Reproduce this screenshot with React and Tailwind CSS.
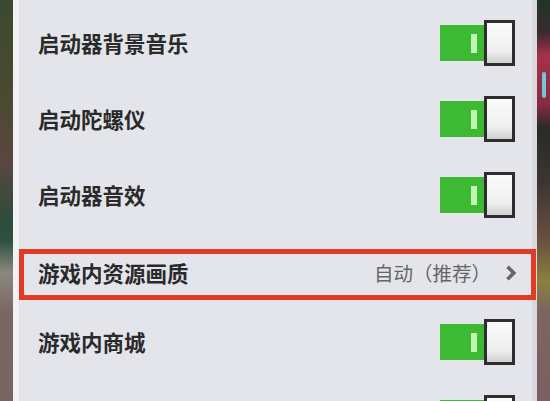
const font = { fontFamily: '"Noto Sans CJK SC", "Noto Sans", sans-serif' }

const rows = [
  { label: '启动器背景音乐', type: 'toggle' },
  { label: '启动陀螺仪', type: 'toggle' },
  { label: '启动器音效', type: 'toggle' },
  { label: '游戏内资源画质', type: 'select', value: '自动（推荐）' },
  { label: '游戏内商城', type: 'toggle' },
  { label: '游戏内社区', type: 'toggle' },
]

function Toggle() {
  return (
    <div className="flex items-center">
      <div className="flex h-[36px] w-[45px] items-center justify-end bg-[#3dba34] pr-[8px]">
        <div className="h-[19px] w-[6px] bg-[#c4f4b4]" />
      </div>
      <div className="-ml-px h-[46px] w-[31px] border-[3px] border-[#2e2e2e] bg-[linear-gradient(180deg,#fbfbfb_0%,#efefef_70%,#cfcfcf_100%)]" />
    </div>
  )
}

function Chevron() {
  return (
    <svg width="12" height="16" viewBox="0 0 12 16" className="text-[#666]">
      <path d="M2.5 1.8 L8.8 8 L2.5 14.2" fill="none" stroke="currentColor" strokeWidth="3.6" strokeLinejoin="miter" />
    </svg>
  )
}

export default function App() {
  return (
    <div className="flex h-[401px] w-[550px] overflow-hidden" style={font}>
      <div className="w-[13px] shrink-0 bg-[linear-gradient(180deg,#3b4a2f_0%,#4a4a30_25%,#5a4640_40%,#2f4c3b_55%,#2c5140_60%,#8a887e_68%,#7b6560_78%,#7a6460_100%)]" />

      <div className="flex w-[524px] shrink-0 flex-col border-l-[6px] border-r-[5px] border-l-[#f2f2f4] border-r-[#d9d9dd] bg-[#e4e5ea] pt-[5px]">
        {rows.map((r, i) =>
          r.type === 'select' ? (
            <div key={i} className="h-[71px] shrink-0 pt-[16px] pb-[4px]">
              <div className="-mr-[4px] flex h-[51px] items-center justify-between border-[5px] border-[#e23a24] pl-[14px] pr-[14px] pb-[3px]">
                <span className="text-[21.5px] font-bold leading-none text-[#2a2a2a]">{r.label}</span>
                <div className="flex items-center gap-[14px]">
                  <span className="text-[19.5px] leading-none text-[#666]">{r.value}</span>
                  <Chevron />
                </div>
              </div>
            </div>
          ) : (
            <div key={i} className="flex h-[76px] shrink-0 items-center justify-between pl-[19px] pr-[17px]">
              <span className="text-[21.5px] font-bold leading-none text-[#2a2a2a]">{r.label}</span>
              <Toggle />
            </div>
          )
        )}
      </div>

      <div className="relative flex-1 bg-[linear-gradient(180deg,#1f3626_0%,#3a2a30_8%,#a8304c_14%,#8a2a40_26%,#2a2a28_32%,#3a3530_45%,#6a5040_60%,#8a8040_70%,#7c6560_78%,#7a6060_100%)]">
        <div className="absolute left-[5px] top-[72px] h-[26px] w-[4px] rounded-full bg-[#6fc8d8]" />
      </div>
    </div>
  )
}
